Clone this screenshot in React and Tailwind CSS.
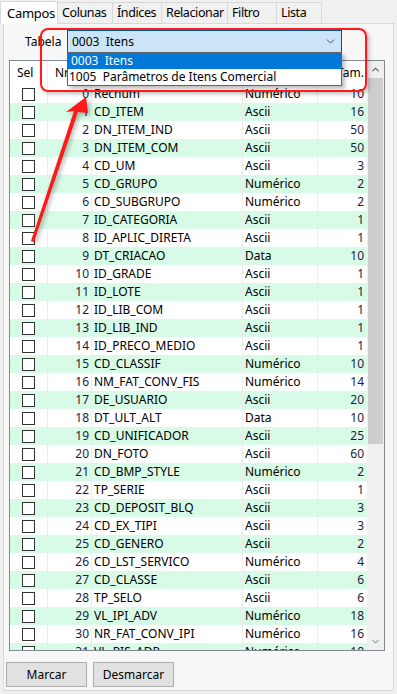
import { ChevronDown, ChevronUp } from "lucide-react";

const campos = [
  ["Recnum", "Numérico", 10],
  ["CD_ITEM", "Ascii", 16],
  ["DN_ITEM_IND", "Ascii", 50],
  ["DN_ITEM_COM", "Ascii", 50],
  ["CD_UM", "Ascii", 3],
  ["CD_GRUPO", "Numérico", 2],
  ["CD_SUBGRUPO", "Numérico", 2],
  ["ID_CATEGORIA", "Ascii", 1],
  ["ID_APLIC_DIRETA", "Ascii", 1],
  ["DT_CRIACAO", "Data", 10],
  ["ID_GRADE", "Ascii", 1],
  ["ID_LOTE", "Ascii", 1],
  ["ID_LIB_COM", "Ascii", 1],
  ["ID_LIB_IND", "Ascii", 1],
  ["ID_PRECO_MEDIO", "Ascii", 1],
  ["CD_CLASSIF", "Numérico", 10],
  ["NM_FAT_CONV_FIS", "Numérico", 14],
  ["DE_USUARIO", "Ascii", 20],
  ["DT_ULT_ALT", "Data", 10],
  ["CD_UNIFICADOR", "Ascii", 25],
  ["DN_FOTO", "Ascii", 60],
  ["CD_BMP_STYLE", "Numérico", 2],
  ["TP_SERIE", "Ascii", 1],
  ["CD_DEPOSIT_BLQ", "Ascii", 3],
  ["CD_EX_TIPI", "Ascii", 3],
  ["CD_GENERO", "Ascii", 2],
  ["CD_LST_SERVICO", "Numérico", 4],
  ["CD_CLASSE", "Ascii", 6],
  ["TP_SELO", "Ascii", 6],
  ["VL_IPI_ADV", "Numérico", 18],
  ["NR_FAT_CONV_IPI", "Numérico", 16],
  ["VL_PIS_ADP", "Numérico", 18],
];

const tabs = [
  { label: "Campos", w: "w-[58px]" },
  { label: "Colunas", w: "w-[55px]" },
  { label: "Índices", w: "w-[49px]" },
  { label: "Relacionar", w: "w-[66px]" },
  { label: "Filtro", w: "w-[49px]" },
  { label: "Lista", w: "w-[45px]" },
];

export default function App() {
  return (
    <div
      className="relative w-[397px] h-[694px] overflow-hidden bg-[#f0f0f0] flex flex-col text-[12px] text-black"
      style={{ fontFamily: '"Noto Sans", "Segoe UI", sans-serif' }}
    >
      {/* Tabs */}
      <div className="flex h-[23px] shrink-0 items-end">
        {tabs.map((t, i) =>
          i === 0 ? (
            <div
              key={t.label}
              className={`${t.w} h-[23px] -mb-px z-10 bg-white border border-b-0 border-[#d9d9d9] pl-[6px] pt-[2px] text-[13px] tracking-[-0.3px]`}
            >
              {t.label}
            </div>
          ) : (
            <div
              key={t.label}
              className={`${t.w} h-[21px] bg-[#f0f0f0] border border-l-0 border-b-0 border-[#d9d9d9] pl-[4px] pt-[1px] text-[12.5px] tracking-[-0.4px] whitespace-nowrap`}
            >
              {t.label}
            </div>
          )
        )}
      </div>

      {/* Panel */}
      <div className="flex-1 min-h-0 mx-[3px] mb-[3px] border border-[#d9d9d9] bg-[#f7f7f7] flex flex-col pt-[6px] pb-[3px]">
        <div className="flex items-center h-[23px] shrink-0">
          <span className="ml-[21px] w-[42px]">Tabela</span>
          <div className="w-[275px] h-[23px] bg-[#cce4f7] border border-[#005499] flex items-center px-[4px]">
            <span className="flex-1">0003&nbsp; Itens</span>
            <ChevronDown size={13} strokeWidth={1.5} className="text-[#333]" />
          </div>
        </div>

        {/* Grid */}
        <div className="flex-1 min-h-0 ml-[5px] mr-[8px] mt-[7px] border border-[#828790] bg-white flex overflow-hidden">
          <div className="flex-1 min-h-0 flex flex-col overflow-hidden">
            <div className="flex h-[24px] shrink-0 items-center bg-white">
              <div className="w-[38px] pl-[7px] border-r border-[#ececec] h-full flex items-center">Sel</div>
              <div className="w-[44px] pl-[7px] border-r border-[#ececec] h-full flex items-center">Nr.</div>
              <div className="w-[151px] border-r border-[#ececec] h-full" />
              <div className="w-[75px] border-r border-[#ececec] h-full" />
              <div className="flex-1 pr-[3px] h-full flex items-center justify-end">Tam.</div>
            </div>
            {campos.map(([nome, tipo, tam], i) => (
              <div
                key={nome}
                className={`flex h-[18px] shrink-0 items-center ${i % 2 ? "bg-[#d7fbe6]" : "bg-white"}`}
              >
                <div className="w-[38px] h-full border-r border-[#ececec] flex items-center pl-[12px]">
                  <div className="w-[13px] h-[13px] border border-[#333] bg-white" />
                </div>
                <div className="w-[44px] h-full border-r border-[#ececec] flex items-center justify-end pr-[2px] text-[#1c1c40]">
                  {i}
                </div>
                <div className="w-[151px] h-full border-r border-[#ececec] flex items-center pl-[2px]">{nome}</div>
                <div className="w-[75px] h-full border-r border-[#ececec] flex items-center pl-[2px]">{tipo}</div>
                <div className="flex-1 h-full flex items-center justify-end pr-[3px] text-[#1c1c40]">{tam}</div>
              </div>
            ))}
          </div>
          {/* Scrollbar */}
          <div className="w-[17px] shrink-0 bg-[#f0f0f0] flex flex-col">
            <div className="h-[17px] shrink-0 flex items-center justify-center">
              <ChevronUp size={11} strokeWidth={2.5} className="text-[#606060]" />
            </div>
            <div className="mx-[1px] h-[366px] shrink-0 bg-[#cdcdcd]" />
            <div className="flex-1" />
            <div className="h-[17px] shrink-0 flex items-center justify-center">
              <ChevronDown size={11} strokeWidth={2.5} className="text-[#a0a0a0]" />
            </div>
          </div>
        </div>

        {/* Buttons */}
        <div className="flex shrink-0 gap-[6px] ml-[2px] mt-[11px]">
          <button className="w-[81px] h-[25px] bg-[#e1e1e1] border border-[#adadad]">Marcar</button>
          <button className="w-[81px] h-[25px] bg-[#e1e1e1] border border-[#adadad]">Desmarcar</button>
        </div>
      </div>

      {/* Dropdown list */}
      <div className="absolute left-[67px] top-[52px] w-[275px] h-[34px] bg-white border border-[#646464] shadow-[3px_3px_4px_rgba(0,0,0,0.25)] flex flex-col">
        <div className="h-[16px] bg-[#0078d7] text-white pl-[3px] leading-[16px]">0003&nbsp; Itens</div>
        <div className="h-[16px] pl-[1px] leading-[16px]">1005&nbsp; Parâmetros de Itens Comercial</div>
      </div>

      {/* Annotation */}
      <div className="absolute left-[40px] top-[28px] w-[327px] h-[64px] rounded-[8px] border-[2.5px] border-[#ff1a1a] shadow-[2px_2px_4px_rgba(0,0,0,0.25)]" />
      <svg className="absolute left-0 top-0" width="397" height="694" viewBox="0 0 397 694">
        <polygon
          points="31,241 34,242 78,112 88,113 86,97 66,112 74,111"
          fill="#ff1a1a"
          style={{ filter: "drop-shadow(2px 2px 2px rgba(0,0,0,0.3))" }}
        />
      </svg>
    </div>
  );
}
